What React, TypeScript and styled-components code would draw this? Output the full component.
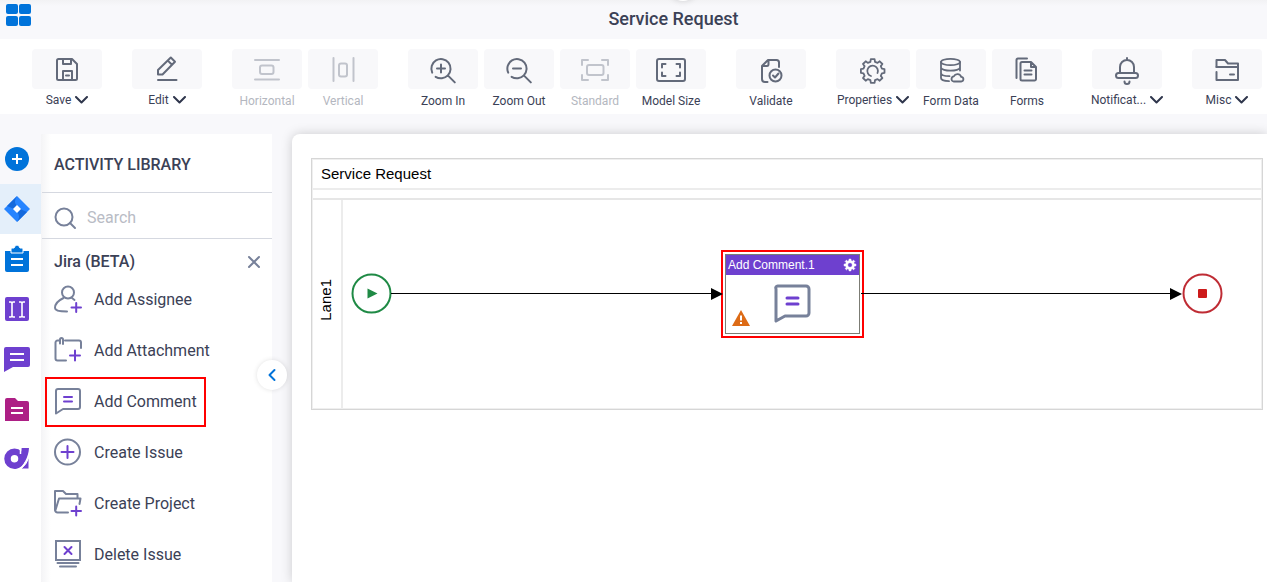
import React from "react";
import styled, { createGlobalStyle, css } from "styled-components";

const GlobalStyle = createGlobalStyle`
  * { box-sizing: border-box; }
  body { margin: 0; background: #f8f8fb; font-family: Roboto, "Liberation Sans", sans-serif; color: #3b4156; }
  button { font: inherit; color: inherit; border: 0; padding: 0; background: none; cursor: pointer; }
  h1, h2, h3, ul { margin: 0; padding: 0; }
  ul { list-style: none; }
  svg { display: block; flex: none; }
`;

const slate = "#636a7a";
const steel = "#77819a";
const purple = "#6e40cf";
const blue = "#0073da";

const Page = styled.div`
  display: flex;
  flex-direction: column;
  height: 100vh;
  overflow: hidden;
`;

const Header = styled.header`
  position: relative;
  display: grid;
  grid-template-columns: 80px 1fr;
  height: 39px;
  flex: none;
  background: linear-gradient(#f2f2f4, #f8f8fb 6px);
`;

const HeaderKnob = styled.span`
  position: absolute;
  left: 54%;
  top: -27px;
  width: 28px;
  height: 28px;
  margin-left: -15px;
  border-radius: 50%;
  background: #fff;
  box-shadow: 0 0 6px rgba(0, 0, 0, 0.15);
`;

const AppsButton = styled.button`
  align-self: start;
  justify-self: start;
  margin: 4px 0 0 6px;
`;

const Title = styled.h1`
  font-size: 18px;
  font-weight: 500;
  line-height: 38px;
  text-align: center;
`;

const Toolbar = styled.nav`
  display: flex;
  gap: 30px;
  height: 75px;
  flex: none;
  padding: 10px 0 0 32px;
  background: #fff;
`;

const Group = styled.div`
  display: flex;
  gap: 6px;
`;

const Tool = styled.button<{ $wide?: boolean }>`
  display: flex;
  flex-direction: column;
  flex: none;
  width: ${(p) => (p.$wide ? 74 : 70)}px;
  color: ${slate};
  &:disabled { color: #c1c4cc; cursor: default; }
`;

const Tile = styled.span`
  display: flex;
  align-items: center;
  justify-content: center;
  width: 100%;
  height: 40px;
  border-radius: 4px;
  background: #f8f8fa;
`;

const ToolLabel = styled.span<{ $menu?: boolean; $dim?: boolean }>`
  display: flex;
  align-items: center;
  justify-content: ${(p) => (p.$menu ? "flex-start" : "center")};
  align-self: center;
  gap: 4px;
  font-size: 12px;
  line-height: ${(p) => (p.$menu ? 22 : 24)}px;
  white-space: nowrap;
  color: ${(p) => (p.$dim ? "#b4b7c0" : "#3b4156")};
`;

const Body = styled.main`
  display: flex;
  flex: 1;
  min-height: 0;
  padding-top: 20px;
`;

const Rail = styled.nav`
  display: flex;
  flex-direction: column;
  width: 41px;
  flex: none;
  background: #fff;
`;

const RailButton = styled.button<{ $tone?: "plain" | "active" }>`
  display: flex;
  align-items: center;
  height: 50px;
  padding-left: 3px;
  ${(p) => p.$tone === "plain" && css`background: #f8f8fb;`}
  ${(p) => p.$tone === "active" && css`background: #e4effa;`}
`;

const Panel = styled.aside`
  position: relative;
  width: 231px;
  flex: none;
  background: linear-gradient(90deg, #f4f4f6, #fff 10px);
`;

const PanelTitle = styled.h2`
  height: 58px;
  padding-left: 13px;
  font-size: 16px;
  font-weight: 500;
  line-height: 61px;
`;

const SearchBar = styled.label`
  display: flex;
  align-items: center;
  gap: 10px;
  height: 47px;
  margin-left: 1px;
  padding: 4px 0 0 11px;
  border-top: 1px solid #d5d8e0;
  border-bottom: 1px solid #d5d8e0;
`;

const SearchInput = styled.input`
  width: 100%;
  min-width: 0;
  border: 0;
  padding: 0;
  outline: 0;
  background: none;
  font: 16px/20px Roboto, sans-serif;
  color: #3b4156;
  &::placeholder { color: #b9bcc5; opacity: 1; }
`;

const Section = styled.div`
  display: flex;
  align-items: center;
  justify-content: space-between;
  height: 35px;
  padding: 10px 11px 0 13px;
`;

const SectionTitle = styled.h3`
  font-size: 16px;
  font-weight: 500;
  line-height: 20px;
`;

const Activity = styled.button<{ $marked?: boolean }>`
  display: flex;
  align-items: center;
  gap: 12px;
  height: 50px;
  margin: 1px 0 0 4px;
  padding: 0 9px 2px;
  font-size: 16px;
  white-space: nowrap;
  ${(p) => p.$marked && css`box-shadow: inset 0 0 0 2px #f00;`}
`;

const Collapse = styled.button`
  position: absolute;
  z-index: 2;
  right: -15px;
  top: 226px;
  display: flex;
  align-items: center;
  justify-content: center;
  width: 30px;
  height: 30px;
  border-radius: 50%;
  background: #fff;
  box-shadow: 0 0 5px rgba(0, 0, 0, 0.12);
`;

const Canvas = styled.section`
  flex: 1;
  min-width: 0;
  margin-left: 20px;
  padding: 24px 4px 0 19px;
  border-top-left-radius: 8px;
  background: #fff;
  box-shadow: 0 0 12px rgba(0, 0, 0, 0.18);
`;

const Pool = styled.div`
  border: 1px solid #d6d6d6;
  padding: 1px;
  box-shadow: inset 0 0 0 1px #efefef;
  font-family: "Liberation Sans", sans-serif;
  color: #000;
`;

const PoolTitle = styled.h2`
  height: 30px;
  padding-left: 8px;
  border-bottom: 2px solid #ececec;
  font-size: 15px;
  font-weight: 400;
  line-height: 28px;
`;

const PoolBand = styled.div`
  height: 10px;
  border-bottom: 2px solid #e6e6e6;
`;

const Lane = styled.div`
  display: flex;
  height: 208px;
`;

const LaneLabel = styled.div`
  display: flex;
  align-items: center;
  justify-content: center;
  width: 30px;
  flex: none;
  border-right: 2px solid #ececec;
  padding: 0 2px 8px 0;
  font-size: 15px;
  line-height: 18px;
  span { writing-mode: vertical-rl; transform: rotate(180deg); }
`;

const Flow = styled.div`
  display: flex;
  align-items: center;
  flex: 1;
  padding: 0 39px 20px 8px;
`;

const EventNode = styled.svg`
  overflow: visible;
`;

const Connector = styled.div<{ $share: number; $into?: boolean }>`
  display: flex;
  align-items: center;
  flex: ${(p) => p.$share} 1 0;
  z-index: 1;
  margin: ${(p) => (p.$into ? "0 -2px 1px 0" : "0 0 1px -3px")};
  &::before { content: ""; flex: 1; height: 1px; background: #000; }
`;

const Task = styled.div`
  flex: none;
  width: 143px;
  height: 88px;
  border: 2px solid #f00;
  padding: 2px;
  background: #fff;
`;

const TaskCard = styled.div`
  display: flex;
  flex-direction: column;
  height: 100%;
  border: 1px solid #7c7c74;
`;

const TaskHead = styled.div`
  display: flex;
  align-items: center;
  justify-content: space-between;
  height: 20px;
  padding: 0 2px;
  background: ${purple};
  color: #fff;
  font-size: 12px;
  line-height: 20px;
`;

const TaskBody = styled.div`
  position: relative;
  display: flex;
  justify-content: center;
  flex: 1;
  padding: 7px 2px 0 0;
`;

const Warning = styled.svg`
  position: absolute;
  left: 6px;
  bottom: 7px;
`;

type IconProps = { children: React.ReactNode; size?: number; color?: string };

const Icon = ({ children, size = 32, color = "currentColor" }: IconProps) => (
  <svg width={size} height={size} viewBox={`0 0 ${size} ${size}`} fill="none" stroke={color}
    strokeWidth="2" strokeLinecap="round" strokeLinejoin="round" aria-hidden="true">
    {children}
  </svg>
);

const Chevron = () => (
  <svg width="13" height="8" viewBox="0 0 13 8" fill="none" stroke="#2f364c" strokeWidth="2"
    strokeLinecap="round" strokeLinejoin="round" aria-hidden="true">
    <path d="M1 1l5.500 5.500L12 1" />
  </svg>
);

const lens = "M5.2 19.6A9.6 9.6 0 1 1 20.8 22.4A9.6 9.6 0 0 1 8.6 23.8M20.8 22.4l7 7";

// Eight-toothed cog outline centred on (cx, cy).
const cog = (cx: number, cy: number, outer: number, inner: number) => {
  const pts: string[] = [];
  for (let i = 0; i < 8; i++) {
    const a = (i * Math.PI) / 4;
    [[-0.24, inner], [-0.16, outer], [0.16, outer], [0.24, inner]].forEach(([d, r]) => {
      pts.push(`${(cx + r * Math.sin(a + d)).toFixed(1)} ${(cy - r * Math.cos(a + d)).toFixed(1)}`);
    });
  }
  return `M${pts.join("L")}z`;
};

type ToolDef = { label: string; icon: React.ReactNode; menu?: boolean; disabled?: boolean; wide?: boolean };

const toolGroups: ToolDef[][] = [
  [{ label: "Save", menu: true, icon: <><path d="M7.500 6H21l5 5v14.500a1.500 1.500 0 0 1-1.500 1.500h-17A1.500 1.500 0 0 1 6 25.500v-18A1.500 1.500 0 0 1 7.500 6z" /><path d="M12 6v5h8V6M12 27v-9h9v9M15 22.500h3" /></> }],
  [{ label: "Edit", menu: true, icon: <path d="M7 21.500V17L19.800 4.500l4.200 4.200L11.500 21.500zM16.800 7.600l4.200 4.200M7 27h18.500" /> }],
  [
    { label: "Horizontal", disabled: true, icon: <><path d="M4 7h24M4 26.500h24" /><rect x="9" y="12.500" width="13.500" height="8.500" rx="2" /></> },
    { label: "Vertical", disabled: true, icon: <><path d="M6.500 5v23M26.500 5v23" /><rect x="12" y="10.500" width="8" height="13" rx="2" /></> },
  ],
  [
    { label: "Zoom In", icon: <path d={`${lens}M10 15.500h8M14 11.500v8`} /> },
    { label: "Zoom Out", icon: <path d={`${lens}M10 15.500h8`} /> },
    { label: "Standard", disabled: true, icon: <><path d="M3 12V7h6M23 7h6v5M29 22v5h-6M9 27H3v-5" /><rect x="8" y="12" width="16.500" height="10" rx="2" /></> },
    { label: "Model Size", icon: <><rect x="2" y="6" width="28" height="22" rx="2" /><path d="M7 14.500V11h3.500M21.500 11H25v3.500M25 19.500V23h-3.500M10.500 23H7v-3.500" /></> },
  ],
  [{ label: "Validate", icon: <><path d="M12.500 29H10a3 3 0 0 1-3-3V13l6-6h8.500a2.500 2.500 0 0 1 2.500 2.500V14M7.500 13H12q1.500 0 1.500-2V7" /><circle cx="20.500" cy="22.500" r="6" /><path d="M18 22.500l2 2 3.500-4" /></> }],
  [
    { label: "Properties", menu: true, wide: true, icon: <g strokeWidth="1.800"><path d={cog(15.7, 18, 12, 9.5)} /><path d="M14 23A5.300 5.300 0 1 1 20.500 20" /></g> },
    { label: "Form Data", icon: <g strokeWidth="1.800"><ellipse cx="15.500" cy="9" rx="9.500" ry="3.200" /><path d="M6 9v16c0 2 4 3.200 8 3.200M25 9v8.500M6 14.500c0 2 5 3.200 9.500 3.200s9.500-1.200 9.500-3.200M6 20c0 2 4 3.200 8.500 3.200" /><path d="M18.500 28.500h7.500a2.300 2.300 0 0 0 .200-4.600 4 4 0 0 0-7.400-.500 2.600 2.600 0 0 0-.300 5.100z" /></g> },
    { label: "Forms", icon: <><path d="M5.500 25V7a1.500 1.500 0 0 1 1.500-1.500h9" /><path d="M11 9h9l5 5v12a1.500 1.500 0 0 1-1.500 1.500H11A1.500 1.500 0 0 1 9.500 26V10.500A1.500 1.500 0 0 1 11 9zM20 9v5h5M13.500 17.500h7M13.500 21.500h7" /></> },
  ],
  [{ label: "Notificat...", menu: true, icon: <><path d="M16 5v2M9 20v-6a7 7 0 0 1 14 0v6M13.500 28.500a2.500 2.500 0 0 0 5 0" /><rect x="5" y="20" width="22" height="5" rx="2.500" /></> }],
  [{ label: "Misc", menu: true, icon: <><path d="M5.500 14V7h8.500l3 3.500h10V27H5.500V19" /><path d="M5.500 14h21.500M19 21.500h4" /></> }],
];

const railItems: { name: string; tone?: "plain" | "active"; icon: React.ReactNode }[] = [
  { name: "Add", tone: "plain", icon: <><circle cx="14" cy="14" r="12" fill={blue} /><path d="M9 14h10M14 9v10" stroke="#fff" strokeWidth="2" /></> },
  { name: "Jira", tone: "active", icon: <><path d="M14 1l13 13-13 13L1 14z" fill="#2684ff" /><path d="M14 1q-4 6 0 10l-3 3L4 11z" fill="#1469dc" /><path d="M14 27q4-6 0-10l3-3 7 3z" fill="#1469dc" /><path d="M14 10l4 4-4 4-4-4z" fill="#fff" /></> },
  { name: "Tasks", icon: <><path d="M2 6h24v19a2 2 0 0 1-2 2H4a2 2 0 0 1-2-2z" fill={blue} /><path d="M8 8V4q0-1 1-1h2q1-3 3-3t3 3h2q1 0 1 1v4z" fill={blue} stroke="#fff" strokeWidth="1" /><path d="M8 14h12M8 20h12" stroke="#fff" strokeWidth="2" /></> },
  { name: "Text", icon: <><rect x="2" y="2" width="24" height="24" rx="2" fill={purple} /><path d="M9 8v13M19 8v13M6 7h2l1 1 1-1h2M16 7h2l1 1 1-1h2M6 22h2l1-1 1 1h2M16 22h2l1-1 1 1h2" stroke="#fff" strokeWidth="1.600" fill="none" /></> },
  { name: "Messages", icon: <><path d="M3 2h22a2 2 0 0 1 2 2v16a2 2 0 0 1-2 2H10L1 27V4a2 2 0 0 1 2-2z" fill={purple} /><path d="M7 9h14M7 15h14" stroke="#fff" strokeWidth="2" /></> },
  { name: "Folders", icon: <><path d="M4 3h8l3 3h9a2 2 0 0 1 2 2v18H2V5a2 2 0 0 1 2-2z" fill="#ad1f85" /><path d="M8 13h12M8 18h12" stroke="#fff" strokeWidth="2" /></> },
  { name: "Automation", icon: <><circle cx="11.500" cy="13.800" r="7" fill="none" stroke={purple} strokeWidth="6.500" /><path d="M18.500 3H26C25.500 12 21 22 12 24V18Q18 17 18.500 3z" fill={purple} /><path d="M17.500 2v7" stroke="#fff" strokeWidth="1.500" /><path d="M26 12v12h-8q6-5 8-12z" fill={purple} stroke="#fff" strokeWidth="1" /></> },
];

const activities: { label: string; marked?: boolean; icon: React.ReactNode }[] = [
  { label: "Add Assignee", icon: <><circle cx="14" cy="7.500" r="6" /><path d="M9.500 13Q1 17 1 23q0 3.500 12 3.500M18 13l2.500 2" /><path d="M17.500 22.500h9.500M22.200 18v9" stroke={purple} /></> },
  { label: "Add Attachment", icon: <><path d="M12 24.500H3.500a2 2 0 0 1-2-2V6.500a2 2 0 0 1 2-2H5M11 4.500h14a2 2 0 0 1 2 2V12" /><path d="M6 7.500V3.500q0-1.500 1.500-1.500T9 3.500V8" /><path d="M16 19.500h10M21 14.500v10" stroke={purple} /></> },
  { label: "Add Comment", marked: true, icon: <><path d="M4 2h20a2 2 0 0 1 2 2v16a2 2 0 0 1-2 2H9l-7 4.500V4a2 2 0 0 1 2-2z" /><path d="M10 10h8M10 14.500h8" stroke={purple} /></> },
  { label: "Create Issue", icon: <><circle cx="13.500" cy="14" r="12.500" /><path d="M7.500 14h12M13.500 8v12" stroke={purple} /></> },
  { label: "Create Project", icon: <><path d="M14 23.500H3.500a2.500 2.500 0 0 1-2.500-2.500V2h8l3 3h11.500v4" /><path d="M1.500 21L5 9.500h21.500L25.500 15" /><path d="M17.500 22h9.500M22.200 17.500v9" stroke={purple} /></> },
  { label: "Delete Issue", icon: <><rect x="2" y="1" width="24" height="19" strokeLinejoin="miter" /><path d="M3.500 23h21M6 26.500h16" /><path d="M10.500 7l7 7M17.500 7l-7 7" stroke={purple} /></> },
];

const ArrowHead = () => (
  <svg width="12" height="12" viewBox="0 0 12 12" aria-hidden="true"><path d="M0 0l12 6-12 6z" fill="#000" /></svg>
);

export default function App() {
  return (
    <Page>
      <GlobalStyle />
      <Header>
        <AppsButton aria-label="Apps">
          <svg width="25" height="22" viewBox="0 0 25 22" fill={blue}>
            <rect width="12" height="10" rx="2" /><rect x="13" width="12" height="10" rx="2" />
            <rect y="12" width="12" height="10" rx="2" /><rect x="13" y="12" width="12" height="10" rx="2" />
          </svg>
        </AppsButton>
        <Title>Service Request</Title>
        <HeaderKnob />
      </Header>
      <Toolbar>
        {toolGroups.map((group) => (
          <Group key={group[0].label}>
            {group.map((t) => (
              <Tool key={t.label} disabled={t.disabled} $wide={t.wide}>
                <Tile><Icon>{t.icon}</Icon></Tile>
                <ToolLabel $menu={t.menu} $dim={t.disabled}>{t.label}{t.menu && <Chevron />}</ToolLabel>
              </Tool>
            ))}
          </Group>
        ))}
      </Toolbar>
      <Body>
        <Rail>
          {railItems.map((r) => (
            <RailButton key={r.name} $tone={r.tone} aria-label={r.name}>
              <svg width="28" height="28" viewBox="0 0 28 28">{r.icon}</svg>
            </RailButton>
          ))}
        </Rail>
        <Panel>
          <PanelTitle>ACTIVITY LIBRARY</PanelTitle>
          <SearchBar>
            <Icon size={24} color={steel}><circle cx="11" cy="11" r="8.500" /><path d="M17 17l5 5" /></Icon>
            <SearchInput type="text" placeholder="Search" aria-label="Search" />
          </SearchBar>
          <Section>
            <SectionTitle>Jira (BETA)</SectionTitle>
            <button aria-label="Close">
              <Icon size={14} color={steel}><path d="M2 2l10 10M12 2L2 12" /></Icon>
            </button>
          </Section>
          <ul>
            {activities.map((a) => (
              <li key={a.label}>
                <Activity $marked={a.marked}>
                  <Icon size={28} color={steel}>{a.icon}</Icon>
                  {a.label}
                </Activity>
              </li>
            ))}
          </ul>
          <Collapse aria-label="Collapse">
            <Icon size={14} color={blue}><path d="M9.500 2l-5 5 5 5" /></Icon>
          </Collapse>
        </Panel>
        <Canvas>
          <Pool>
            <PoolTitle>Service Request</PoolTitle>
            <PoolBand />
            <Lane>
              <LaneLabel><span>Lane1</span></LaneLabel>
              <Flow>
                <EventNode width="40" height="40" viewBox="0 0 40 40" fill="none">
                  <circle cx="20.500" cy="19.500" r="19" stroke="#1f8a45" strokeWidth="2" />
                  <path d="M16.500 14.500l10 5-10 5z" fill="#1f8a45" />
                </EventNode>
                <Connector $share={332} $into><ArrowHead /></Connector>
                <Task>
                  <TaskCard>
                    <TaskHead>
                      Add Comment.1
                      <svg width="14" height="14" viewBox="0 0 14 14" aria-hidden="true">
                        <path d={`${cog(7, 7, 6, 4.5)}M7 4.700a2.300 2.300 0 1 0 0 4.600a2.300 2.300 0 1 0 0-4.600z`} fill="#fff" stroke="#fff" strokeWidth="0.500" fillRule="evenodd" />
                      </svg>
                    </TaskHead>
                    <TaskBody>
                      <svg width="40" height="42" viewBox="0 0 40 42" fill="none" stroke={steel} strokeWidth="3" strokeLinejoin="round" strokeLinecap="round">
                        <path d="M6 4h28a3 3 0 0 1 3 3v24a3 3 0 0 1-3 3H13L4 39V7a2 2 0 0 1 2-3z" />
                        <path d="M15 16h11M15 22h11" stroke={purple} />
                      </svg>
                      <Warning width="18" height="16" viewBox="0 0 18 16">
                        <path d="M9 0l9 16H0z" fill="#dd6b16" />
                        <path d="M9 5.500v5M9 12v2" stroke="#fff" strokeWidth="2" />
                      </Warning>
                    </TaskBody>
                  </TaskCard>
                </Task>
                <Connector $share={321}><ArrowHead /></Connector>
                <EventNode width="40" height="40" viewBox="0 0 40 40" fill="none">
                  <circle cx="20.500" cy="19.500" r="19" stroke="#bf2c34" strokeWidth="2" />
                  <rect x="16" y="15" width="9" height="9" rx="1" fill="#cc1a1a" />
                </EventNode>
              </Flow>
            </Lane>
          </Pool>
        </Canvas>
      </Body>
    </Page>
  );
}
